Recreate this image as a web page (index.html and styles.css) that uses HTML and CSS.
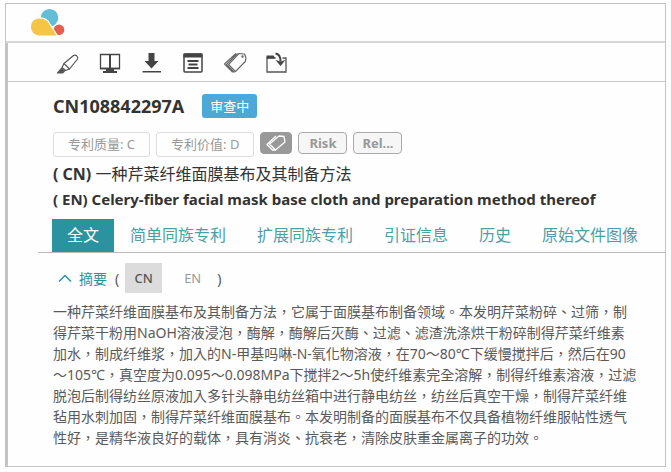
FILE: index.html
```html
<!DOCTYPE html>
<html lang="zh">
<head>
    <meta charset="UTF-8">
    <meta name="viewport" content="width=device-width, initial-scale=1.0">
    <title>CN108842297A</title>
    <link rel="stylesheet" href="styles.css">
</head>
<body>
    <div class="page">
        <header class="header">
            <svg class="logo" width="34" height="28" viewBox="0 0 34 28">
                <circle cx="18.500" cy="8.800" r="8.800" fill="#62bdd6"/>
                <circle cx="28" cy="20.800" r="5.300" fill="#e4604e"/>
                <path d="M8.500 9.500c3.500 0 6 1 8 3l9 14H8.500C3.500 26.500 0 22.500 0 18 0 13 3.500 9.500 8.500 9.500z" fill="#f5c544" stroke="#fefefe" stroke-width="2.500"/>
                <path d="M8.500 9.500c3.500 0 6 1 8 3l9 14H8.500C3.500 26.500 0 22.500 0 18 0 13 3.500 9.500 8.500 9.500z" fill="#f5c544"/>
            </svg>
        </header>

        <main class="main">
            <div class="toolbar">
                <button class="tool" aria-label="Highlight">
                    <svg width="24" height="24" viewBox="0 0 24 24" fill="none" stroke="#555" stroke-width="1.200" stroke-linejoin="round">
                        <path d="M8 12.500L17.500 4.500c2-1.300 5.300 1.200 4 3.500L13.500 18z"/>
                        <path d="M8 12.500l-2 4 3.500 3 4-1.500"/>
                        <path d="M5.500 17.500l3 2.500-2 2H1.500z" fill="#555"/>
                    </svg>
                </button>
                <button class="tool" aria-label="Compare">
                    <svg width="24" height="24" viewBox="0 0 24 24" fill="none" stroke="#444">
                        <path d="M2.500 3.500h19v14h-19z" stroke-width="1.300"/>
                        <path d="M12 3v15" stroke-width="2"/>
                        <path d="M2 17.500h20" stroke-width="1.500"/>
                        <path d="M8 18h8v2h3v2H5v-2h3z" fill="#444" stroke="none"/>
                    </svg>
                </button>
                <button class="tool" aria-label="Download">
                    <svg width="24" height="24" viewBox="0 0 24 24" fill="#444">
                        <path d="M8.500 2h6v8h4L11.500 17.500 4.500 10h4z"/>
                        <path d="M2.500 20h18.500v1.500H2.500z"/>
                    </svg>
                </button>
                <button class="tool" aria-label="Notes">
                    <svg width="24" height="24" viewBox="0 0 24 24" fill="none" stroke="#444">
                        <rect x="2" y="3" width="18" height="18" rx="1" stroke-width="1.500"/>
                        <path d="M1.500 2.500h19v4h-19z" fill="#444" stroke="none"/>
                        <path d="M5.500 10h11M6.500 13.500h9M5.500 17h11" stroke-width="1.800"/>
                    </svg>
                </button>
                <button class="tool" aria-label="Tags">
                    <svg width="24" height="24" viewBox="0 0 24 24" fill="none" stroke="#666" stroke-width="1.100" stroke-linejoin="round">
                        <path d="M15 2.500l5.500.5c1.500 2.500 1.800 5 .8 7.500L11.500 20.500 4.500 13.500z"/>
                        <path d="M12 2.500L.5 13l8 8h2.500M13.500 2.500L2.500 13.300l7.500 7.500"/>
                        <circle cx="18.500" cy="5.500" r=".7"/>
                    </svg>
                </button>
                <button class="tool" aria-label="Save to folder">
                    <svg width="24" height="24" viewBox="0 0 24 24" fill="none" stroke="#555">
                        <path d="M9.500 7H1v14h19V7h-3.500" stroke-width="1.300"/>
                        <path d="M.5 4.500h7l2 3h-9z" fill="#444" stroke="none"/>
                        <path d="M9.500 2.500c4 .5 5 4 5 8" stroke="#444" stroke-width="2"/>
                        <path d="M9.500 9l5 6 5-6-5 1.500z" fill="#444" stroke="none"/>
                    </svg>
                </button>
            </div>

            <section class="patent">
                <div class="number-row">
                    <h1 class="number">CN108842297A</h1>
                    <span class="status">审查中</span>
                </div>

                <div class="badges">
                    <span class="badge">专利质量: C</span>
                    <span class="badge">专利价值: D</span>
                    <button class="label label-icon" aria-label="Tag">
                        <svg width="22" height="20" viewBox="0 0 22 20" fill="none" stroke="#fff" stroke-width="1.300" stroke-linejoin="round">
                            <path d="M14 3l5 .5 1 5.500-9.500 8L4.500 11z"/>
                            <path d="M11 3l-9 8.500 5.500 5.500h3"/>
                        </svg>
                    </button>
                    <button class="label">Risk</button>
                    <button class="label">Rel...</button>
                </div>

                <p class="title title-cn"><b>( CN)</b> 一种芹菜纤维面膜基布及其制备方法</p>
                <p class="title"><b>( EN) Celery-fiber facial mask base cloth and preparation method thereof</b></p>
            </section>

            <nav class="tabs">
                <a class="tab active" href="#full">全文</a>
                <a class="tab" href="#simple">简单同族专利</a>
                <a class="tab" href="#extended">扩展同族专利</a>
                <a class="tab" href="#citations">引证信息</a>
                <a class="tab" href="#history">历史</a>
                <a class="tab" href="#images">原始文件图像</a>
            </nav>

            <section class="abstract" id="full">
                <div class="abstract-head">
                    <button class="toggle">
                        <svg width="14" height="8" viewBox="0 0 14 8" fill="none" stroke="#2b93a0" stroke-width="1.500">
                            <path d="M1 7.500l6-6 6 6"/>
                        </svg>
                        摘要
                    </button>
                    <span class="paren">(</span>
                    <button class="lang active">CN</button>
                    <button class="lang">EN</button>
                    <span class="paren">)</span>
                </div>
                <p class="abstract-text" lang="zh-TW">
                    一种芹菜纤维面膜基布及其制备方法，它属于面膜基布制备领域。本发明芹菜粉碎、过筛，制<br>
                    得芹菜干粉用NaOH溶液浸泡，酶解，酶解后灭酶、过滤、滤渣洗涤烘干粉碎制得芹菜纤维素<br>
                    加水，制成纤维浆，加入的N-甲基吗啉-N-氧化物溶液，在70～80℃下缓慢搅拌后，然后在90<br>
                    ～105℃，真空度为0.095～0.098MPa下搅拌2～5h使纤维素完全溶解，制得纤维素溶液，过滤<br>
                    脱泡后制得纺丝原液加入多针头静电纺丝箱中进行静电纺丝，纺丝后真空干燥，制得芹菜纤维<br>
                    毡用水刺加固，制得芹菜纤维面膜基布。本发明制备的面膜基布不仅具备植物纤维服帖性透气<br>
                    性好，是精华液良好的载体，具有消炎、抗衰老，清除皮肤重金属离子的功效。
                </p>
            </section>
        </main>
    </div>
</body>
</html>
```
FILE: styles.css
```css
* {
    box-sizing: border-box;
}

body {
    margin: 0;
    padding: 3px 5px 4px;
    background-color: #fefefe;
    color: #333;
    font-family: "Noto Sans", "Noto Sans CJK TC", sans-serif;
    font-size: 14px;
}

button {
    margin: 0;
    padding: 0;
    border: none;
    background: none;
    font-family: inherit;
    cursor: pointer;
}

.page {
    border: 1px solid #c4c4c4;
}

.header {
    height: 39px;
    padding: 5px 25px;
    border-bottom: 2px solid #d8d8d8;
}

.logo {
    display: block;
}

.main {
    border-left: 2px solid #c4c4c4;
}

.toolbar {
    display: flex;
    gap: 18px;
    padding: 8px 48px 6px;
    border-bottom: 1px solid #c8c8c8;
}

.tool {
    width: 24px;
    height: 24px;
}

.tool svg,
.label svg {
    display: block;
}

.patent {
    padding: 12px 45px 7px;
}

.number-row {
    display: flex;
    align-items: center;
    gap: 18px;
}

.number {
    margin: 0;
    font-size: 18px;
    line-height: 24px;
}

.status {
    padding: 0 8px;
    border-radius: 3px;
    background-color: #4ba9da;
    color: #fff;
    font-size: 13px;
    line-height: 24px;
}

.badges {
    display: flex;
    align-items: flex-start;
    gap: 6px;
    margin: 14px 0 5px;
}

.badge {
    padding: 0 14px;
    border: 1px solid #ddd;
    border-radius: 3px;
    color: #999;
    font-size: 13px;
    line-height: 23px;
}

.label {
    min-width: 49px;
    height: 22px;
    border: 1px solid #aaa;
    border-radius: 4px;
    background-color: #f6f6f6;
    color: #999;
    font-size: 13px;
    font-weight: bold;
    line-height: 20px;
}

.label-icon {
    display: flex;
    justify-content: center;
    min-width: 32px;
    border-color: #999;
    background-color: #999;
}

.title {
    margin: 0;
    font-size: 15px;
    line-height: 25px;
}

.title-cn {
    font-size: 16px;
}

.tabs {
    display: flex;
    gap: 1px;
    margin-left: 30px;
    padding-left: 14px;
    border-bottom: 1px solid #bbb;
}

.tab {
    padding: 0 15px;
    color: #4d9ea6;
    font-size: 16px;
    line-height: 33px;
    text-decoration: none;
    white-space: nowrap;
}

.tab.active {
    background-color: #2b93a0;
    color: #fff;
}

.abstract {
    padding: 10px 40px 18px 45px;
}

.abstract-head {
    display: flex;
    align-items: center;
}

.toggle {
    display: flex;
    align-items: center;
    gap: 7px;
    padding: 0 8px 0 5px;
    color: #2b93a0;
    font-size: 14px;
}

.paren {
    color: #555;
    font-size: 14px;
}

.lang {
    width: 37px;
    height: 30px;
    margin: 0 6px;
    color: #999;
    font-size: 13px;
}

.lang.active {
    background-color: #dcdcdc;
    color: #555;
    font-weight: 500;
}

.abstract-text {
    margin: 8px 0 0;
    color: #5a5a5a;
    font-size: 14px;
    line-height: 21px;
    white-space: nowrap;
}
```
